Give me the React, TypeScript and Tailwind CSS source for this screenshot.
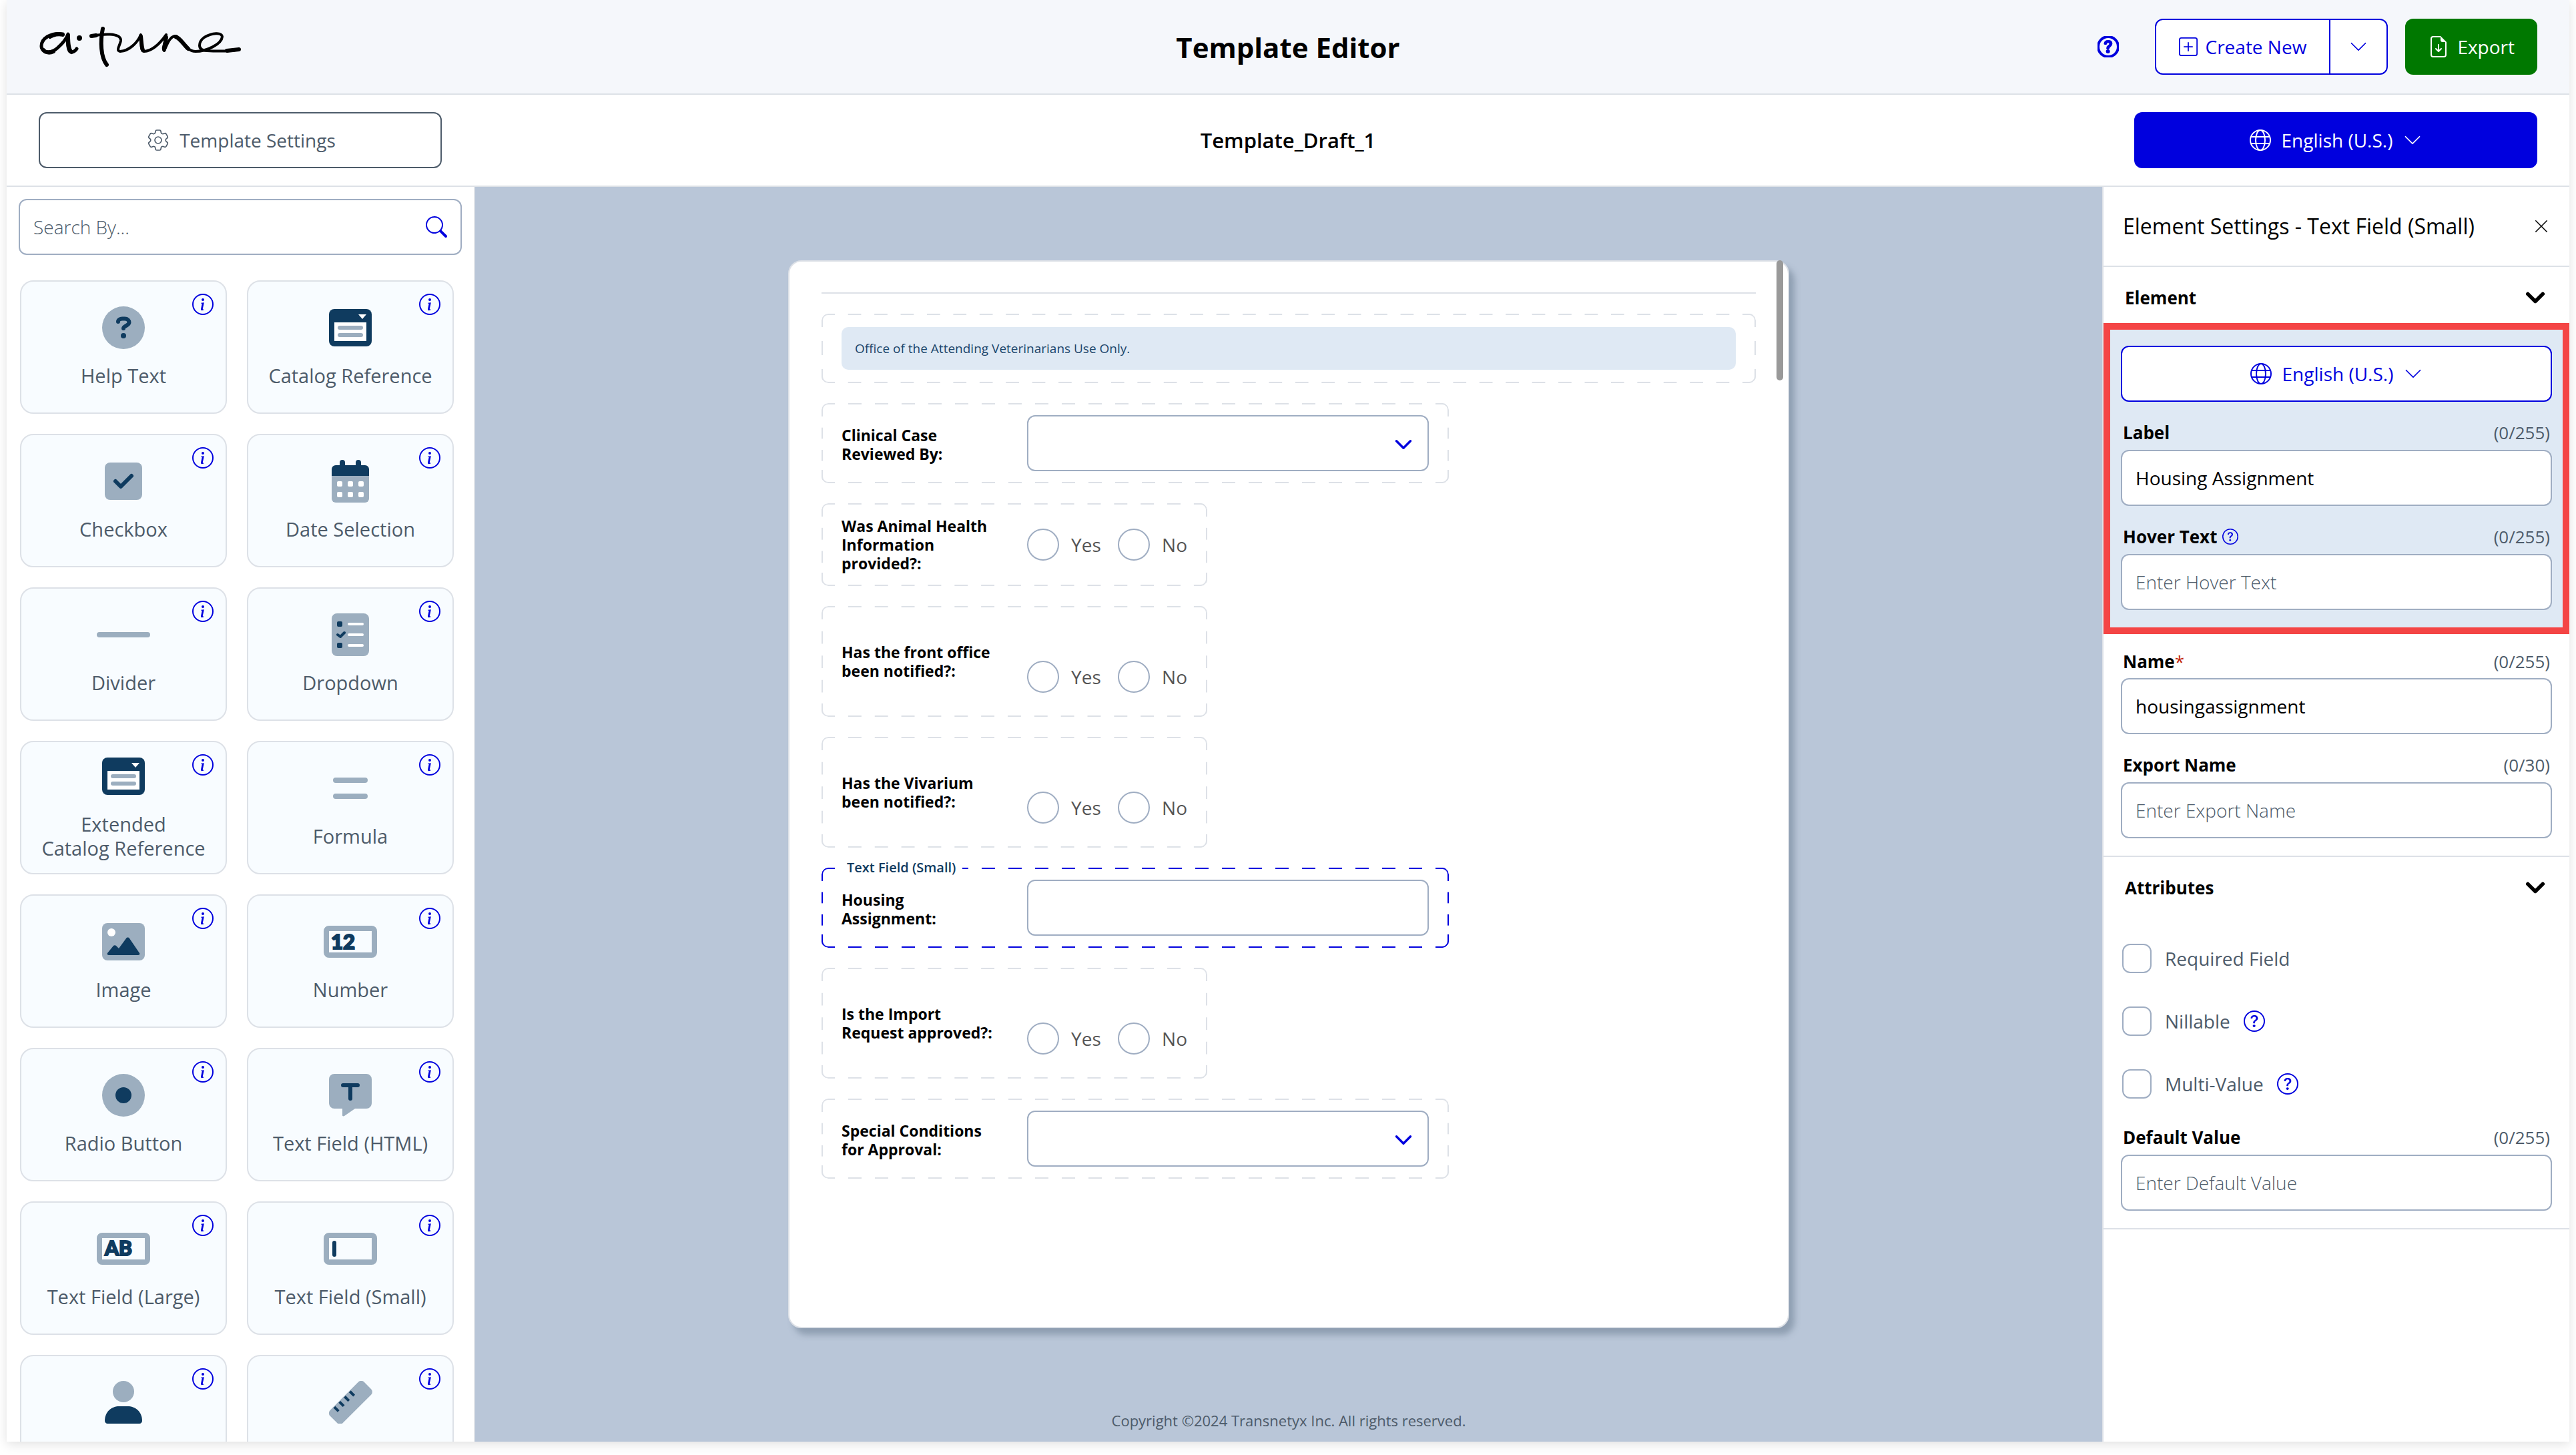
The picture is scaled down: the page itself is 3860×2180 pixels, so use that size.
import type { ReactNode } from 'react';
import {
    BsChevronDown,
    BsFileEarmarkArrowDown,
    BsInfoCircle,
    BsPlusSquare,
    BsQuestionCircle,
    BsSearch,
    BsXLg,
} from 'react-icons/bs';
import { HiOutlineCog6Tooth } from 'react-icons/hi2';

const NAVY = '#0f3b5f';
const STEEL = '#9caebf';

function Logo() {
    return (
        <svg width="304" height="64" viewBox="-2 -2 304 64" fill="none" stroke="#000" strokeLinecap="round" strokeLinejoin="round" aria-label="a·tune" role="img">
            <path strokeWidth="5" d="M34 11C16 8 2 18 2 29C2 39 16 41 26 32C34 25 40 17 42 11C41 23 41 38 47 38C50 38 53 36 55 33" />
            <path strokeWidth="6" d="M34 12C28 10 20 12 15 15M42 13C42 23 42 34 47 38M5 35C9 40 16 39 20 37" />
            <circle cx="59" cy="17" r="2" strokeWidth="4" fill="#000" />
            <path strokeWidth="6" d="M94 3C90 22 91 46 100 57" />
            <path strokeWidth="4" d="M76 14C92 11 122 8 121 21C120 28 113 36 120 37C134 36 146 24 151 12C152 22 150 37 156 37C170 36 182 22 189 12C189 22 182 32 186 36C190 28 194 14 203 14C212 16 218 37 233 37C250 37 272 26 273 15C272 8 258 9 246 16C238 22 234 35 250 36C266 37 284 37 298 34" />
            <path strokeWidth="6" d="M77 14L84 13M151 14C152 22 152 30 154 35M186 34L189 16M203 15C210 17 216 28 222 33M280 36L298 34" />
        </svg>
    );
}

function GlobeIcon() {
    return (
        <svg width="32" height="32" viewBox="0 0 32 32" fill="none" stroke="currentColor" strokeWidth="2">
            <circle cx="16" cy="16" r="15" />
            <ellipse cx="16" cy="16" rx="7" ry="15" />
            <path d="M2 11h28M2 21h28" />
        </svg>
    );
}

function ElementIcon({ name }: { name: string }) {
    return (
        <svg width="80" height="64" viewBox="0 0 80 64" fill="none">
            {name === 'help' && (
                <>
                    <circle cx="40" cy="32" r="32" fill={STEEL} />
                    <path d="M32 23c0-3 3-4.500 6-4.500h4c4 0 6.500 2.500 6.500 5.500 0 5-8.500 5-8.500 9" stroke={NAVY} strokeWidth="6" strokeLinecap="round" />
                    <circle cx="40" cy="44" r="4" fill={NAVY} />
                </>
            )}
            {name === 'catalog' && (
                <>
                    <rect x="8" y="4" width="64" height="56" rx="8" fill={NAVY} />
                    <path d="M52 12h12l-6 7z" fill="#fff" />
                    <rect x="16" y="24" width="48" height="28" fill="#fff" />
                    <path d="M24 32h32M24 43h32" stroke={STEEL} strokeWidth="6" strokeLinecap="round" />
                </>
            )}
            {name === 'checkbox' && (
                <>
                    <rect x="12" y="4" width="56" height="56" rx="8" fill={STEEL} />
                    <path d="M28 32l8 8 16-16" stroke={NAVY} strokeWidth="6" strokeLinecap="round" strokeLinejoin="round" />
                </>
            )}
            {name === 'date' && (
                <>
                    <path d="M12 24h56v34a6 6 0 0 1-6 6H18a6 6 0 0 1-6-6z" fill={STEEL} />
                    <path d="M12 24v-10a6 6 0 0 1 6-6h44a6 6 0 0 1 6 6v10zM24 4a4 4 0 0 1 8 0v6h-8zM48 4a4 4 0 0 1 8 0v6h-8z" fill={NAVY} />
                    {[20, 36, 52].map((x) => (
                        <g key={x} fill="#fff">
                            <rect x={x} y="32" width="8" height="8" rx="2" />
                            <rect x={x} y="48" width="8" height="8" rx="2" />
                        </g>
                    ))}
                </>
            )}
            {name === 'divider' && <rect x="0" y="28" width="80" height="8" rx="4" fill={STEEL} />}
            {name === 'dropdown' && (
                <>
                    <rect x="12" y="0" width="56" height="64" rx="8" fill={STEEL} />
                    <rect x="20" y="12" width="8" height="8" rx="2" fill={NAVY} />
                    <rect x="20" y="44" width="8" height="8" rx="2" fill={NAVY} />
                    <path d="M21 32l4 3 6-6" stroke={NAVY} strokeWidth="4" strokeLinecap="round" strokeLinejoin="round" />
                    <path d="M38 16h20M38 32h20M38 48h20" stroke="#fff" strokeWidth="4" strokeLinecap="round" />
                </>
            )}
            {name === 'formula' && <path d="M18 20h44M18 44h44" stroke={STEEL} strokeWidth="8" strokeLinecap="round" />}
            {name === 'image' && (
                <>
                    <rect x="8" y="4" width="64" height="56" rx="8" fill={STEEL} />
                    <circle cx="22" cy="18" r="6" fill="#fff" />
                    <path d="M18 52c-2 0-3-2-2-3l9-11c1-1 3-1 4 0l4 4 11-15c1-2 4-2 5 0l15 22c1 1 0 3-2 3z" fill={NAVY} />
                </>
            )}
            {(name === 'number' || name === 'large' || name === 'small') && (
                <rect x="4" y="12" width="72" height="40" rx="4" stroke={STEEL} strokeWidth="8" />
            )}
            {name === 'number' && (
                <text x="11" y="43" fontSize="31" fontWeight="900" fontFamily="Lato, sans-serif" fill={NAVY} stroke={NAVY} strokeWidth="2">12</text>
            )}
            {name === 'large' && (
                <text x="12" y="42" fontSize="30" fontWeight="900" fontFamily="Lato, sans-serif" fill={NAVY} stroke={NAVY} strokeWidth="2">AB</text>
            )}
            {name === 'small' && <path d="M16 23v18" stroke={NAVY} strokeWidth="6" strokeLinecap="round" />}
            {name === 'radio' && (
                <>
                    <circle cx="40" cy="32" r="32" fill={STEEL} />
                    <circle cx="40" cy="32" r="12" fill={NAVY} />
                </>
            )}
            {name === 'html' && (
                <>
                    <path d="M16 0h48a8 8 0 0 1 8 8v36a8 8 0 0 1-8 8H47L31 63c-2 1-3 0-3-1V52H16a8 8 0 0 1-8-8V8a8 8 0 0 1 8-8z" fill={STEEL} />
                    <path d="M29 17h22M40 17v20" stroke={NAVY} strokeWidth="6" strokeLinecap="round" />
                </>
            )}
            {name === 'user' && (
                <>
                    <circle cx="40" cy="16" r="16" fill={STEEL} />
                    <path d="M12 60c0-14 10-22 22-22h12c12 0 22 8 22 22 0 2-2 4-4 4H16c-2 0-4-2-4-4z" fill={NAVY} />
                </>
            )}
            {name === 'ruler' && (
                <g transform="rotate(-45 40 32)">
                    <rect x="4" y="19" width="72" height="27" rx="6" fill={STEEL} />
                    <path d="M18 20v9M29 20v9M40 20v9M51 20v9" stroke={NAVY} strokeWidth="4" />
                </g>
            )}
        </svg>
    );
}

const ELEMENTS = [
    { icon: 'help', label: 'Help Text' },
    { icon: 'catalog', label: 'Catalog Reference' },
    { icon: 'checkbox', label: 'Checkbox' },
    { icon: 'date', label: 'Date Selection' },
    { icon: 'divider', label: 'Divider' },
    { icon: 'dropdown', label: 'Dropdown' },
    { icon: 'catalog', label: 'Extended\nCatalog Reference' },
    { icon: 'formula', label: 'Formula' },
    { icon: 'image', label: 'Image' },
    { icon: 'number', label: 'Number' },
    { icon: 'radio', label: 'Radio Button' },
    { icon: 'html', label: 'Text Field (HTML)' },
    { icon: 'large', label: 'Text Field (Large)' },
    { icon: 'small', label: 'Text Field (Small)' },
    { icon: 'user', label: '' },
    { icon: 'ruler', label: '' },
];

function ElementCard({ icon, label }: { icon: string; label: string }) {
    return (
        <div className="relative flex h-[200px] flex-col items-center justify-center gap-[22px] rounded-[20px] border-2 border-[#dde1e7] bg-[#f8fcff]">
            <ElementIcon name={icon} />
            <span className="min-h-9 whitespace-pre-line text-center text-[29px] leading-9 text-[#4d5b6a]">{label}</span>
            <button aria-label="Element info" className="absolute right-[18px] top-[18px] text-[#0000de]">
                <BsInfoCircle size={32} />
            </button>
        </div>
    );
}

// Dashes stretch so that every side ends on a rounded corner piece
function DashedFrame({ active = false }: { active?: boolean }) {
    return (
        <div className={`pointer-events-none absolute inset-0 overflow-hidden rounded-[10px] ${active ? 'text-[#0000de]' : 'text-[#dde1e7]'}`}>
            <div className="absolute left-5 right-0 top-0 h-[2px] bg-[linear-gradient(90deg,transparent_50%,currentColor_50%)] bg-[length:40px_2px] bg-repeat-round" />
            <div className="absolute bottom-0 left-5 right-0 h-[2px] bg-[linear-gradient(90deg,transparent_50%,currentColor_50%)] bg-[length:40px_2px] bg-repeat-round" />
            <div className="absolute bottom-0 left-0 top-5 w-[2px] bg-[linear-gradient(180deg,transparent_50%,currentColor_50%)] bg-[length:2px_40px] bg-repeat-round" />
            <div className="absolute bottom-0 right-0 top-5 w-[2px] bg-[linear-gradient(180deg,transparent_50%,currentColor_50%)] bg-[length:2px_40px] bg-repeat-round" />
            <div className="absolute left-0 top-0 size-5 rounded-tl-[10px] border-l-2 border-t-2 border-current" />
            <div className="absolute right-0 top-0 size-5 rounded-tr-[10px] border-r-2 border-t-2 border-current" />
            <div className="absolute bottom-0 left-0 size-5 rounded-bl-[10px] border-b-2 border-l-2 border-current" />
            <div className="absolute bottom-0 right-0 size-5 rounded-br-[10px] border-b-2 border-r-2 border-current" />
        </div>
    );
}

function FieldRow({ id, label, children, active }: { id: string; label: string; children: ReactNode; active?: boolean }) {
    return (
        <div className="relative flex w-[940px] items-center px-[30px] py-[18px]">
            <DashedFrame active={active} />
            {active && (
                <span className="absolute -top-[14px] left-5 bg-white pl-[18px] pr-[10px] text-[20px] font-semibold leading-7 text-[#0f3b5f]">
                    Text Field (Small)
                </span>
            )}
            <label htmlFor={id} className="w-[278px] shrink-0 pr-14 pt-1 text-[23px] font-bold leading-7 text-black">{label}</label>
            {children}
        </div>
    );
}

function SelectField({ id, label }: { id: string; label: string }) {
    return (
        <FieldRow id={id} label={label}>
            <div className="relative flex-1">
                <select id={id} className="block h-[84px] w-full appearance-none rounded-xl border-2 border-[#9fadc2] bg-white" />
                <BsChevronDown size={28} strokeWidth={1} className="pointer-events-none absolute right-6 top-[30px] text-[#0000de]" />
            </div>
        </FieldRow>
    );
}

function RadioField({ name, label, tall }: { name: string; label: string; tall?: boolean }) {
    return (
        <div
            role="radiogroup"
            aria-labelledby={`${name}-label`}
            className={`relative flex w-[578px] items-center px-[30px] ${tall ? 'h-[166px]' : 'py-5'}`}
        >
            <DashedFrame />
            <span id={`${name}-label`} className="w-[278px] shrink-0 pr-12 text-[23px] font-bold leading-7 text-black">{label}</span>
            <div className={`flex flex-1 justify-between ${tall ? 'pt-[46px]' : ''}`}>
                {['Yes', 'No'].map((option) => (
                    <label key={option} className="flex items-center gap-[18px] text-[28px] leading-9 text-[#555]">
                        <input type="radio" name={name} className="size-12 appearance-none rounded-full border-2 border-[#9fadc2] bg-white" />
                        {option}
                    </label>
                ))}
            </div>
        </div>
    );
}

function LanguageButton({ className }: { className: string }) {
    return (
        <button className={`flex h-[84px] items-center justify-center gap-4 rounded-xl text-[28px] ${className}`}>
            <GlobeIcon />
            English (U.S.)
            <BsChevronDown size={28} />
        </button>
    );
}

interface SettingFieldProps {
    id: string;
    label: string;
    count: string;
    value?: string;
    placeholder?: string;
    required?: boolean;
    help?: boolean;
    first?: boolean;
}

function SettingField({ id, label, count, value, placeholder, required, help, first }: SettingFieldProps) {
    return (
        <div>
            <div className={`flex items-center justify-between px-[3px] ${first ? 'h-[66px] pt-4' : 'h-[72px] pt-5'}`}>
                <div className="flex items-center gap-2">
                    <label htmlFor={id} className="text-[26px] font-bold text-black">
                        {label}
                        {required && <span className="font-normal text-[#c2260c]">*</span>}
                    </label>
                    {help && <BsQuestionCircle size={24} className="text-[#0000de]" />}
                </div>
                <span className="text-[26px] text-[#4d5b6a]">{count}</span>
            </div>
            <input
                id={id}
                type="text"
                defaultValue={value}
                placeholder={placeholder}
                className="block h-[84px] w-full rounded-xl border-2 border-[#9fadc2] bg-white px-5 text-[28px] text-black placeholder:font-light placeholder:text-[#4d5b6a]"
            />
        </div>
    );
}

function SectionHeader({ title }: { title: string }) {
    return (
        <button className="flex w-full items-center justify-between pb-5 pl-8 pr-9 pt-7 text-[26px] font-bold leading-9 text-black">
            {title}
            <BsChevronDown size={30} strokeWidth={2} />
        </button>
    );
}

function CheckField({ id, label, help }: { id: string; label: string; help?: boolean }) {
    return (
        <div className="flex items-center">
            <input id={id} type="checkbox" className="size-11 appearance-none rounded-xl border-2 border-[#9fadc2] bg-white" />
            <label htmlFor={id} className="ml-5 mr-5 text-[28px] leading-9 text-[#4d5b6a]">{label}</label>
            {help && <BsQuestionCircle size={32} className="text-[#0000de]" />}
        </div>
    );
}

export default function App() {
    return (
        <div className="h-screen bg-white px-[10px] pb-5 font-['Open_Sans','Noto_Sans',sans-serif]">
            <div className="flex h-full flex-col bg-white shadow-[0_4px_16px_rgba(0,0,0,0.12)]">
                <header className="grid h-[142px] shrink-0 grid-cols-3 items-center border-b-2 border-[#dde1e7] bg-[#f5f7fb] px-12">
                    <Logo />
                    <h1 className="text-center text-[42px] font-bold text-black">Template Editor</h1>
                    <div className="flex items-center justify-end">
                        <button aria-label="Help" className="mr-[54px] text-[#0000de]">
                            <BsQuestionCircle size={32} strokeWidth={1} />
                        </button>
                        <div className="mr-[26px] flex h-[84px] rounded-xl border-2 border-[#0000de] bg-white text-[28px] text-[#0000de]">
                            <button className="flex items-center gap-3 border-r-2 border-[#0000de] px-[34px]">
                                <BsPlusSquare size={28} />
                                Create New
                            </button>
                            <button aria-label="More options" className="px-7">
                                <BsChevronDown size={28} />
                            </button>
                        </div>
                        <button className="flex h-[84px] items-center gap-3 rounded-xl bg-[#007800] px-[34px] text-[28px] text-white">
                            <BsFileEarmarkArrowDown size={32} />
                            Export
                        </button>
                    </div>
                </header>

                <div className="grid h-[138px] shrink-0 grid-cols-3 items-center border-b-2 border-[#dde1e7] px-12">
                    <button className="flex h-[84px] w-[604px] items-center justify-center gap-3 rounded-xl border-2 border-[#4d5b6a] text-[28px] text-[#4d5b6a]">
                        <HiOutlineCog6Tooth size={40} strokeWidth={1} />
                        Template Settings
                    </button>
                    <h2 className="text-center text-[31px] font-semibold text-black">Template_Draft_1</h2>
                    <LanguageButton className="w-[604px] justify-self-end bg-[#0000de] text-white" />
                </div>

                <div className="flex min-h-0 flex-1">
                    <aside className="w-[702px] shrink-0 overflow-hidden border-r-2 border-[#dde1e7] px-[18px] pt-[18px]">
                        <div className="relative">
                            <input
                                type="text"
                                aria-label="Search elements"
                                placeholder="Search By..."
                                className="block h-[84px] w-full rounded-xl border-2 border-[#9fadc2] px-5 text-[28px] placeholder:font-light placeholder:text-[#4d5b6a]"
                            />
                            <BsSearch size={32} className="absolute right-[22px] top-[26px] text-[#0000de]" />
                        </div>
                        <div className="mt-[38px] grid grid-cols-2 gap-[30px] pl-[2px] pr-3">
                            {ELEMENTS.map((element) => (
                                <ElementCard key={element.icon + element.label} {...element} />
                            ))}
                        </div>
                    </aside>

                    <main className="flex flex-1 flex-col items-center bg-[#b9c6d8] pt-[110px]">
                        <div className="relative h-[1600px] w-[1500px] rounded-[20px] border-2 border-[#dde1e7] bg-white px-12 pt-[46px] shadow-[8px_10px_10px_rgba(80,100,120,0.4)]">
                            <div className="absolute -top-[2px] right-[7px] h-[180px] w-[10px] rounded-full bg-[#999]" />
                            <hr className="border-t-2 border-[#dde1e7]" />
                            <form className="mt-[30px] flex flex-col gap-[30px]">
                                <div className="relative px-[30px] py-5">
                                    <DashedFrame />
                                    <p className="rounded-[10px] bg-[#dfe9f4] px-5 py-[18px] text-[19px] leading-7 text-[#1b456a]">
                                        Office of the Attending Veterinarians Use Only.
                                    </p>
                                </div>
                                <SelectField id="reviewed-by" label="Clinical Case Reviewed By:" />
                                <RadioField name="health-info" label="Was Animal Health Information provided?:" />
                                <RadioField name="front-office" label="Has the front office been notified?:" tall />
                                <RadioField name="vivarium" label="Has the Vivarium been notified?:" tall />
                                <FieldRow id="housing" label="Housing Assignment:" active>
                                    <input id="housing" type="text" className="h-[84px] min-w-0 flex-1 rounded-xl border-2 border-[#9fadc2]" />
                                </FieldRow>
                                <RadioField name="import-request" label="Is the Import Request approved?:" tall />
                                <SelectField id="conditions" label="Special Conditions for Approval:" />
                            </form>
                        </div>
                        <footer className="mt-auto pb-[14px] text-[22px] leading-9 text-[#4d5b6a]">
                            Copyright ©2024 Transnetyx Inc. All rights reserved.
                        </footer>
                    </main>

                    <aside className="w-[700px] shrink-0 border-l-2 border-[#dde1e7]">
                        <div className="flex h-[120px] items-center justify-between border-b-2 border-[#dde1e7] pl-[29px] pr-[30px]">
                            <h3 className="text-[32px] text-black">Element Settings - Text Field (Small)</h3>
                            <button aria-label="Close" className="text-black">
                                <BsXLg size={24} />
                            </button>
                        </div>
                        <SectionHeader title="Element" />
                        <div className="border-[10px] border-[#f44545] bg-[#dfe9f4] px-4 pb-[26px] pt-6">
                            <LanguageButton className="w-full border-2 border-[#0000de] bg-white text-[#0000de]" />
                            <SettingField id="label" label="Label" count="(0/255)" value="Housing Assignment" />
                            <SettingField id="hover-text" label="Hover Text" count="(0/255)" placeholder="Enter Hover Text" help />
                        </div>
                        <div className="border-b-2 border-[#dde1e7] px-[26px] pb-[26px]">
                            <SettingField id="name" label="Name" count="(0/255)" value="housingassignment" required first />
                            <SettingField id="export-name" label="Export Name" count="(0/30)" placeholder="Enter Export Name" />
                        </div>
                        <div className="border-b-2 border-[#dde1e7] pb-[26px]">
                            <SectionHeader title="Attributes" />
                            <div className="flex flex-col gap-[50px] px-7 pt-[46px]">
                                <CheckField id="required" label="Required Field" />
                                <CheckField id="nillable" label="Nillable" help />
                                <CheckField id="multi-value" label="Multi-Value" help />
                            </div>
                            <div className="px-[26px] pt-3">
                                <SettingField id="default-value" label="Default Value" count="(0/255)" placeholder="Enter Default Value" />
                            </div>
                        </div>
                    </aside>
                </div>
            </div>
        </div>
    );
}
